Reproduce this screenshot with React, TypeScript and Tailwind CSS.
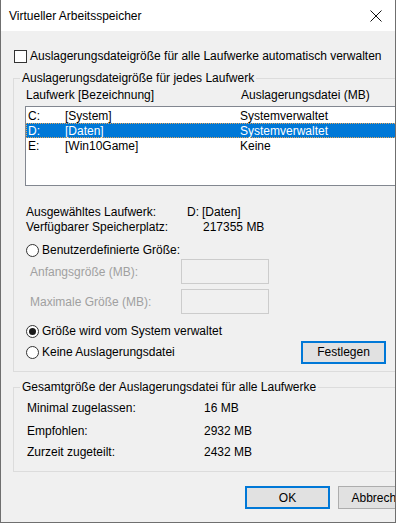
import React from "react";

const drives = [
  { letter: "C:", label: "[System]", size: "Systemverwaltet", selected: false },
  { letter: "D:", label: "[Daten]", size: "Systemverwaltet", selected: true },
  { letter: "E:", label: "[Win10Game]", size: "Keine", selected: false },
];

function Radio({ checked }: { checked?: boolean }) {
  return (
    <span className="w-[13px] h-[13px] rounded-full border border-[#333333] bg-white flex items-center justify-center shrink-0">
      {checked && <span className="w-[7px] h-[7px] rounded-full bg-[#1a1a1a]" />}
    </span>
  );
}

function WinButton({ label, primary }: { label: string; primary?: boolean }) {
  return (
    <button
      className={`h-[23px] w-[85px] bg-[#e1e1e1] text-black text-[12px] leading-none ${
        primary ? "border-2 border-[#0078d7]" : "border border-[#adadad]"
      }`}
    >
      {label}
    </button>
  );
}

export default function App() {
  return (
    <div
      className="w-[396px] h-[523px] border-l border-r border-b border-[#6f6f6f] bg-[#f0f0f0] text-black text-[12px] leading-[16px] overflow-hidden flex flex-col"
      style={{ fontFamily: '"Liberation Sans", Arial, sans-serif' }}
    >
      {/* title bar */}
      <div className="h-[31px] bg-white flex items-center shrink-0">
        <span className="pl-[8px] text-[12px]">Virtueller Arbeitsspeicher</span>
        <svg className="ml-auto mr-[13px]" width="12" height="12" viewBox="0 0 12 12">
          <path d="M0.5 0.5 L11.5 11.5 M11.5 0.5 L0.5 11.5" stroke="#111" strokeWidth="1" fill="none" />
        </svg>
      </div>

      <div className="w-[430px] pl-[12px]">
        {/* auto checkbox */}
        <div className="mt-[17px] h-[16px] flex items-center gap-[3px] pl-[1px]">
          <span className="w-[13px] h-[13px] border border-[#333333] bg-white shrink-0" />
          <span>Auslagerungsdateigröße für alle Laufwerke automatisch verwalten</span>
        </div>

        {/* per drive group */}
        <fieldset className="mt-[6px] border border-[#dcdcdc] pl-[11px] pb-[7px]">
          <legend className="-ml-[5px] px-[2px] leading-[16px]">Auslagerungsdateigröße für jedes Laufwerk</legend>

          <div className="h-[16px] mt-[1px] flex items-center">
            <span className="w-[216px] pl-[1px]">Laufwerk [Bezeichnung]</span>
            <span>Auslagerungsdatei (MB)</span>
          </div>

          <div className="mt-[3px] h-[80px] border border-[#828790] bg-white py-[1px]">
            {drives.map((d) => (
              <div
                key={d.letter}
                className={`h-[15px] flex items-center ${
                  d.selected ? "bg-[#0078d7] text-white outline outline-1 outline-dotted outline-[#e6a65a] -outline-offset-1" : ""
                }`}
              >
                <span className="w-[39px] pl-[2px]">{d.letter}</span>
                <span className="w-[175px]">{d.label}</span>
                <span>{d.size}</span>
              </div>
            ))}
          </div>

          <div className="mt-[18px] h-[15px] flex items-center">
            <span className="w-[162px] pl-[1px]">Ausgewähltes Laufwerk:</span>
            <span className="w-[15px]">D:</span>
            <span>[Daten]</span>
          </div>
          <div className="h-[15px] flex items-center">
            <span className="w-[178px] pl-[1px]">Verfügbarer Speicherplatz:</span>
            <span>217355 MB</span>
          </div>

          <div className="mt-[8px] h-[16px] flex items-center gap-[3px] pl-[1px]">
            <Radio />
            <span>Benutzerdefinierte Größe:</span>
          </div>

          <div className="mt-[1px] flex items-center">
            <span className="w-[156px] pl-[5px] text-[#a0a0a0]">Anfangsgröße (MB):</span>
            <span className="w-[88px] h-[25px] border border-[#cccccc] bg-[#f0f0f0]" />
          </div>
          <div className="mt-[5px] flex items-center">
            <span className="w-[156px] pl-[5px] text-[#a0a0a0]">Maximale Größe (MB):</span>
            <span className="w-[88px] h-[25px] border border-[#cccccc] bg-[#f0f0f0]" />
          </div>

          <div className="mt-[9px] h-[16px] flex items-center gap-[3px] pl-[1px]">
            <Radio checked />
            <span>Größe wird vom System verwaltet</span>
          </div>
          <div className="mt-[1px] h-[24px] flex items-center">
            <div className="w-[276px] flex items-center gap-[3px] pl-[1px]">
              <Radio />
              <span>Keine Auslagerungsdatei</span>
            </div>
            <WinButton label="Festlegen" primary />
          </div>
        </fieldset>

        {/* totals group */}
        <fieldset className="mt-[7px] border border-[#dcdcdc] pl-[13px] pb-[11px]">
          <legend className="-ml-[7px] px-[2px] leading-[16px]">Gesamtgröße der Auslagerungsdatei für alle Laufwerke</legend>
          <div className="mt-[5px] h-[16px] flex items-center">
            <span className="w-[177px]">Minimal zugelassen:</span>
            <span>16 MB</span>
          </div>
          <div className="mt-[7px] h-[16px] flex items-center">
            <span className="w-[177px]">Empfohlen:</span>
            <span>2932 MB</span>
          </div>
          <div className="mt-[5px] h-[16px] flex items-center">
            <span className="w-[177px]">Zurzeit zugeteilt:</span>
            <span>2432 MB</span>
          </div>
        </fieldset>

        <div className="mt-[14px] pl-[232px] flex gap-[8px]">
          <WinButton label="OK" primary />
          <WinButton label="Abbrechen" />
        </div>
      </div>
    </div>
  );
}
